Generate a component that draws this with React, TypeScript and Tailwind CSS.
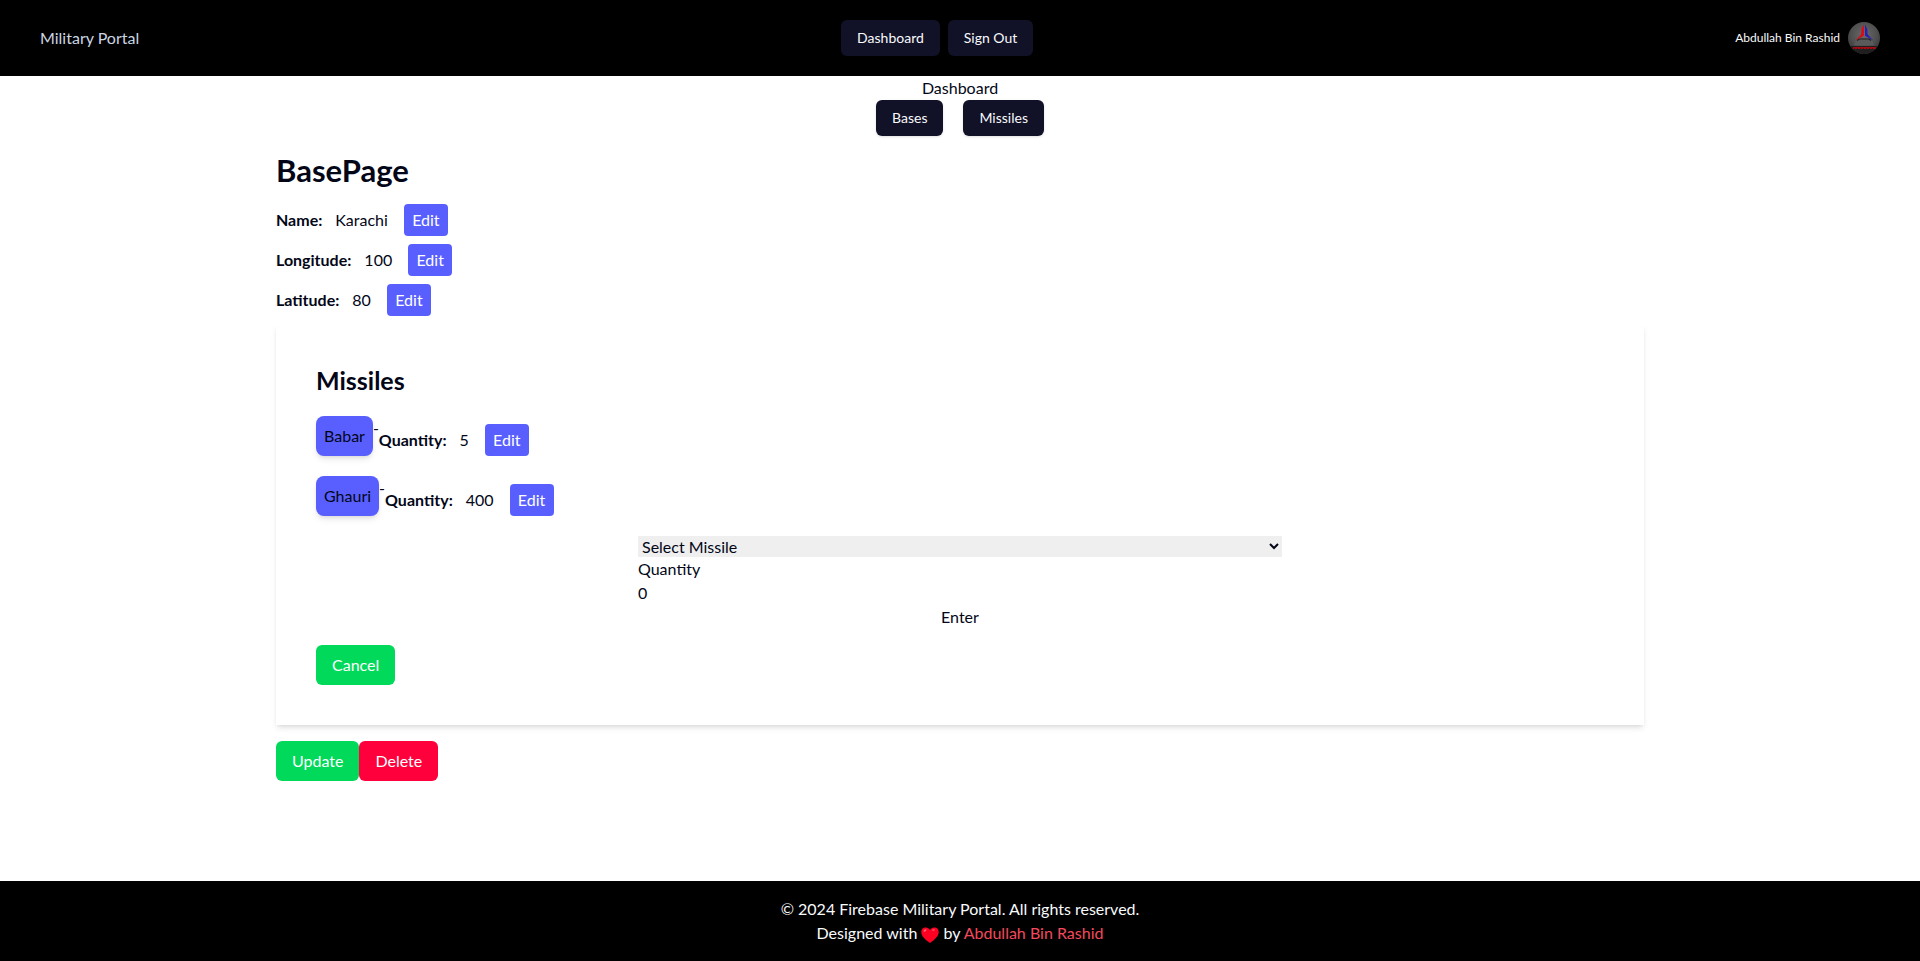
type MissileStock = { name: string; quantity: number };

const details = [
  { label: "Name", value: "Karachi" },
  { label: "Longitude", value: "100" },
  { label: "Latitude", value: "80" },
];

const missiles: MissileStock[] = [
  { name: "Babar", quantity: 5 },
  { name: "Ghauri", quantity: 400 },
];

function NavButton({ children }: { children: string }) {
  return (
    <button
      type="button"
      className="h-9 rounded-md bg-[#111127] px-4 text-sm text-slate-50 shadow-sm"
    >
      {children}
    </button>
  );
}

function EditableField({ label, value }: { label: string; value: string | number }) {
  return (
    <div className="mt-2 flex items-center">
      <span className="font-bold">{label}:</span>
      <span className="ml-[13px]">{value}</span>
      <button type="button" className="ml-4 min-w-11 rounded-sm bg-[#595fff] px-2 py-1 text-white">
        Edit
      </button>
    </div>
  );
}

function Avatar() {
  return (
    <svg viewBox="0 0 32 32" className="size-8 rounded-full" role="img" aria-label="Profile">
      <defs>
        <radialGradient id="stone" cx="0.5" cy="0.4" r="0.65">
          <stop offset="0" stopColor="#6a6a6a" />
          <stop offset="0.6" stopColor="#505050" />
          <stop offset="1" stopColor="#333333" />
        </radialGradient>
      </defs>
      <rect width="32" height="32" fill="url(#stone)" />
      <path d="M0 24h32v8H0z" fill="#1f1f1f" />
      <path d="M8 18q8-4 16 0l2 5H6z" fill="#5a5a5a" />
      <path d="M9 18.5l2-1.500h10l2 1.500" stroke="#202020" strokeWidth="1.2" fill="none" />
      <path d="M15.800 2.800v11L7.500 18.500l6-6.500z" fill="#dc0a14" />
      <path d="M13.500 7l2.300-4.200v9.500l-2.500 1.500z" fill="#dc0a14" />
      <path d="M17 2.800v11l8.300 4.700-6-6.500z" fill="#2a1fb4" />
      <path d="M19.300 7L17 2.800v9.500l2.500 1.500z" fill="#2a1fb4" />
      <path d="M5 26h23" stroke="#a30a14" strokeWidth="2" />
      <path d="M6 26.500h21" stroke="#5c0a10" strokeWidth="1" strokeDasharray="1 2" />
    </svg>
  );
}

export default function App() {
  return (
    <div className="flex min-h-screen flex-col bg-white font-['Lato','Noto_Sans',sans-serif] text-base text-[#020617]">
      <header className="flex h-19 items-center justify-between bg-black px-10">
        <a href="#" className="text-slate-300">
          Military Portal
        </a>
        <nav className="flex gap-2">
          <NavButton>Dashboard</NavButton>
          <NavButton>Sign Out</NavButton>
        </nav>
        <div className="flex items-center gap-2">
          <span className="text-xs text-slate-50">Abdullah Bin Rashid</span>
          <Avatar />
        </div>
      </header>

      <div className="flex flex-col items-center">
        <p>Dashboard</p>
        <nav className="flex gap-5">
          <NavButton>Bases</NavButton>
          <NavButton>Missiles</NavButton>
        </nav>
      </div>

      <main className="mx-auto w-full max-w-[1400px] grow p-4">
        <h1 className="mb-4 text-[31px]/9 font-bold">BasePage</h1>
        {details.map((d) => (
          <EditableField key={d.label} label={d.label} value={d.value} />
        ))}

        <section className="mt-2 p-10 shadow-md">
          <h2 className="mb-5 text-[25px]/8 font-bold">Missiles</h2>
          <ul className="flex flex-col gap-5">
            {missiles.map((m) => (
              <li key={m.name} className="flex items-start">
                <a href="#" className="rounded-lg bg-[#595fff] p-2 shadow-md">
                  {m.name}
                </a>
                <span>-</span>
                <EditableField label="Quantity" value={m.quantity} />
              </li>
            ))}
          </ul>

          <form className="mx-auto mt-5 flex w-1/2 flex-col">
            <select aria-label="Missile" className="h-[21px] w-full bg-[#efefef]">
              <option>Select Missile</option>
              {missiles.map((m) => (
                <option key={m.name}>{m.name}</option>
              ))}
            </select>
            <label htmlFor="quantity">Quantity</label>
            <input id="quantity" inputMode="numeric" defaultValue="0" className="h-6 w-full" />
            <button type="button">Enter</button>
          </form>

          <button type="button" className="mt-4 block rounded-md bg-[#00d95a] px-4 py-2 text-white">
            Cancel
          </button>
        </section>

        <div className="mt-4 flex">
          <button type="button" className="rounded-md bg-[#00d95a] px-4 py-2 text-white">
            Update
          </button>
          <button type="button" className="rounded-md bg-[#ff003d] px-4 py-2 text-white">
            Delete
          </button>
        </div>
      </main>

      <footer className="bg-black p-4 text-center text-slate-50">
        <p>© 2024 Firebase Military Portal. All rights reserved.</p>
        <p>
          Designed with{" "}
          <svg viewBox="0 0 18 16" className="inline h-4 w-[18px]" role="img" aria-label="love">
            <path
              d="M9 16C5 13 0.300 9.500 0.300 5A4.600 4.600 0 0 1 9 3a4.600 4.600 0 0 1 8.700 2C17.700 9.500 13 13 9 16z"
              fill="#ff0022"
            />
            <ellipse cx="4" cy="3.500" rx="1.600" ry="1" fill="#ff6a78" transform="rotate(-35 4 3.500)" />
            <ellipse cx="12.500" cy="3" rx="1.400" ry="0.800" fill="#ff5264" transform="rotate(-25 12.500 3)" />
          </svg>{" "}
          by{" "}
          <a href="#" className="text-[#f4495c]">
            Abdullah Bin Rashid
          </a>
        </p>
      </footer>
    </div>
  );
}
